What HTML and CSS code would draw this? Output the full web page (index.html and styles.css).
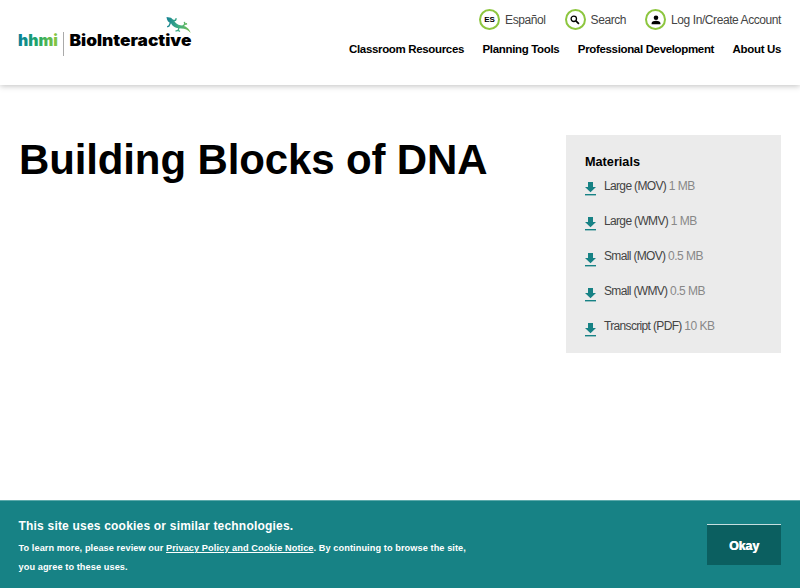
FILE: index.html
```html
<!DOCTYPE html>
<html lang="en">
<head>
  <meta charset="UTF-8">
  <meta name="viewport" content="width=device-width, initial-scale=1.0">
  <title>Building Blocks of DNA</title>
  <link rel="stylesheet" href="styles.css">
</head>
<body>
  <svg class="sprite" aria-hidden="true">
    <symbol id="download" viewBox="0 0 11 14">
      <path d="M3 0h5v5h3L5.500 10.200 0 5h3z"/>
      <path d="M0 12h11v1.400H0z"/>
    </symbol>
  </svg>

  <header class="site-header">
    <a class="logo" href="#" aria-label="HHMI BioInteractive">
      <svg width="176" height="42" viewBox="0 0 176 42">
        <defs>
          <linearGradient id="hhmi" x1="0" x2="1">
            <stop offset="0" stop-color="#087f9b"/>
            <stop offset="0.500" stop-color="#22a866"/>
            <stop offset="1" stop-color="#8cc83e"/>
          </linearGradient>
          <linearGradient id="gecko" x1="148" x2="173" y1="0" y2="0" gradientUnits="userSpaceOnUse">
            <stop offset="0" stop-color="#127f94"/>
            <stop offset="0.500" stop-color="#3fae83"/>
            <stop offset="1" stop-color="#79bd4c"/>
          </linearGradient>
        </defs>
        <text class="logo-hhmi" x="0" y="31" textLength="40" lengthAdjust="spacingAndGlyphs" fill="url(#hhmi)">hhmi</text>
        <path class="logo-rule" d="M45.500 17v24"/>
        <text class="logo-name" x="51.500" y="31" textLength="122" lengthAdjust="spacingAndGlyphs">BioInteractive</text>
        <g fill="none" stroke="url(#gecko)" stroke-width="1.400">
          <path fill="url(#gecko)" stroke="none" d="M148.500 2l4.500.8 3.200 3c1.400 2.500 3.400 4 6.200 4.500 5 .3 8.800 2.900 10.300 7.700-2.700-3.200-5.700-4.600-9.500-4.600-5 0-8.300-1.400-10-4.900-2.800-.8-4.400-3.200-4.700-6.500z"/>
          <path d="M154.500 5.500l3-.2.800-2"/>
          <path d="M152.500 7.500l-1.500 3.500-1.800.8"/>
          <path d="M164.500 11.500l2.300-2.300-.4-2.300M166.800 9.200l2.300-.4"/>
          <path d="M161 12.500l-.8 2.800-2.700.9M160.200 15.300l1.800 1.200"/>
        </g>
      </svg>
    </a>

    <div class="navigation">
      <ul class="utility-nav">
        <li><a href="#"><span class="round-icon">ES</span>Español</a></li>
        <li><a href="#">
          <span class="round-icon">
            <svg width="10" height="10" viewBox="0 0 10 10">
              <circle cx="3.800" cy="3.800" r="2.700" fill="none" stroke="#000" stroke-width="1.300"/>
              <path d="M5.900 5.900l3 3" stroke="#000" stroke-width="1.700"/>
            </svg>
          </span>Search</a></li>
        <li><a href="#">
          <span class="round-icon">
            <svg width="10" height="10" viewBox="0 0 10 10">
              <circle cx="5" cy="2.800" r="2.300"/>
              <path d="M.600 9.300V8c0-1.500 2.600-2.300 4.400-2.300S9.400 6.500 9.400 8v1.300z"/>
            </svg>
          </span>Log In/Create Account</a></li>
      </ul>
      <ul class="main-nav">
        <li><a href="#">Classroom Resources</a></li>
        <li><a href="#">Planning Tools</a></li>
        <li><a href="#">Professional Development</a></li>
        <li><a href="#">About Us</a></li>
      </ul>
    </div>
  </header>

  <main class="content">
    <h1>Building Blocks of DNA</h1>

    <aside class="materials">
      <h2>Materials</h2>
      <ul>
        <li><svg class="download"><use href="#download"/></svg><a href="#">Large (MOV) <span>1 MB</span></a></li>
        <li><svg class="download"><use href="#download"/></svg><a href="#">Large (WMV) <span>1 MB</span></a></li>
        <li><svg class="download"><use href="#download"/></svg><a href="#">Small (MOV) <span>0.5 MB</span></a></li>
        <li><svg class="download"><use href="#download"/></svg><a href="#">Small (WMV) <span>0.5 MB</span></a></li>
        <li><svg class="download"><use href="#download"/></svg><a href="#">Transcript (PDF) <span>10 KB</span></a></li>
      </ul>
    </aside>
  </main>

  <div class="cookie-banner">
    <div class="cookie-text">
      <h2>This site uses cookies or similar technologies.</h2>
      <p>To learn more, please review our <a href="#">Privacy Policy and Cookie Notice</a>. By continuing to browse the site, you agree to these uses.</p>
    </div>
    <button type="button">Okay</button>
  </div>
</body>
</html>
```
FILE: styles.css
```css
* {
  box-sizing: border-box;
}

body {
  display: flex;
  flex-direction: column;
  height: 100vh;
  margin: 0;
  overflow: hidden;
  background-color: #fff;
  color: #000;
  font-family: "Liberation Sans", Arial, sans-serif;
}

ul {
  list-style: none;
  margin: 0;
  padding: 0;
}

a {
  color: inherit;
  text-decoration: none;
}

.sprite {
  display: none;
}

/* Header */
.site-header {
  display: flex;
  justify-content: space-between;
  height: 85px;
  padding: 0 19px 0 18px;
  box-shadow: 0 1px 6px rgba(0, 0, 0, 0.25);
}

.logo {
  padding-top: 15px;
}

.logo svg {
  display: block;
}

.logo-hhmi,
.logo-name {
  font-family: Inter, "Liberation Sans", sans-serif;
  font-size: 15.5px;
  font-weight: 900;
}

.logo-rule {
  stroke: #aaa;
  stroke-width: 1;
}

.navigation {
  display: flex;
  flex-direction: column;
  align-items: flex-end;
  padding-top: 9px;
}

.utility-nav {
  display: flex;
  gap: 19px;
  color: #444;
  font-size: 12px;
  letter-spacing: -0.42px;
}

.utility-nav a {
  display: flex;
  align-items: center;
  gap: 5px;
}

.round-icon {
  display: flex;
  align-items: center;
  justify-content: center;
  width: 21px;
  height: 21px;
  border: 2px solid #8dc63f;
  border-radius: 50%;
  color: #000;
  font-size: 8px;
  font-weight: bold;
  letter-spacing: 0;
}

.main-nav {
  display: flex;
  gap: 18.5px;
  margin-top: 12px;
  font-size: 11.5px;
  font-weight: bold;
  letter-spacing: -0.34px;
  line-height: 14px;
}

/* Page content */
.content {
  display: flex;
  flex: 1;
  align-items: flex-start;
  justify-content: space-between;
  padding: 50px 19px 0;
}

h1 {
  margin: 0;
  font-size: 42px;
  letter-spacing: -0.13px;
  line-height: 50px;
}

.materials {
  width: 215px;
  height: 218px;
  padding: 19px;
  background-color: #ebebeb;
}

.materials h2 {
  margin: 0;
  font-size: 12.7px;
  line-height: 16px;
}

.materials li {
  display: flex;
  align-items: flex-start;
  gap: 8px;
  height: 35.1px;
  padding-top: 8px;
  color: #444;
  font-size: 12px;
  letter-spacing: -0.66px;
  line-height: 16px;
}

.materials li span {
  color: #888;
  letter-spacing: -0.5px;
}

.download {
  width: 11px;
  height: 14px;
  margin-top: 4.4px;
  fill: #178285;
}

/* Cookie notice */
.cookie-banner {
  display: flex;
  align-items: flex-start;
  justify-content: space-between;
  height: 88px;
  padding: 17px 19px 0 18.5px;
  border-top: 1px solid #5caaab;
  background-color: #178285;
  color: #fff;
}

.cookie-text {
  width: 455px;
}

.cookie-banner h2 {
  margin: 0;
  font-size: 12px;
  letter-spacing: 0.2px;
  line-height: 16px;
}

.cookie-banner p {
  margin: 5px 0 0;
  font-size: 9.2px;
  font-weight: bold;
  letter-spacing: 0.08px;
  line-height: 19px;
}

.cookie-banner a {
  text-decoration: underline;
}

.cookie-banner button {
  width: 74px;
  height: 41px;
  margin-top: 6px;
  padding: 2px 0 0;
  border: 0;
  border-top: 1px solid #c5dedf;
  background-color: #0b5f60;
  color: #fff;
  font-family: inherit;
  font-size: 12.3px;
  font-weight: bold;
  text-shadow: 0.5px 0 0 #fff;
}
```
